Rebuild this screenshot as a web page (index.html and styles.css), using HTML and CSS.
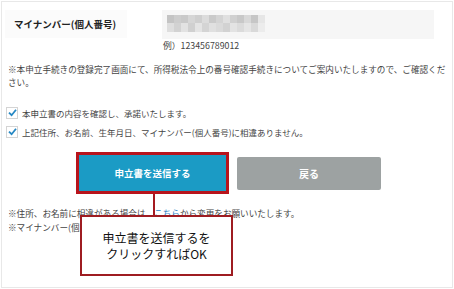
FILE: index.html
```html
<!DOCTYPE html>
<html lang="ja">
<head>
<meta charset="utf-8">
<link rel="stylesheet" href="styles.css">
</head>
<body>
<div class="frame">
  <div class="field-row">
    <div class="label">マイナンバー(個人番号)</div>
    <div class="input-col">
      <div class="input">
        <svg class="mosaic" width="98" height="17" viewBox="0 0 98 17">
          <rect x="0" y="0" width="7" height="8" fill="#c4c4c4"/>
          <rect x="7" y="0" width="7" height="8" fill="#cdcdcd"/>
          <rect x="14" y="0" width="7" height="8" fill="#c9c9c9"/>
          <rect x="21" y="0" width="7" height="8" fill="#d6d6d6"/>
          <rect x="28" y="0" width="7" height="8" fill="#cfcfcf"/>
          <rect x="35" y="0" width="7" height="8" fill="#dcdcdc"/>
          <rect x="42" y="0" width="7" height="8" fill="#cacaca"/>
          <rect x="49" y="0" width="7" height="8" fill="#d4d4d4"/>
          <rect x="56" y="0" width="7" height="8" fill="#e0e0e0"/>
          <rect x="63" y="0" width="7" height="8" fill="#d0d0d0"/>
          <rect x="70" y="0" width="7" height="8" fill="#c8c8c8"/>
          <rect x="77" y="0" width="7" height="8" fill="#d8d8d8"/>
          <rect x="84" y="0" width="7" height="8" fill="#c6c6c6"/>
          <rect x="91" y="0" width="7" height="8" fill="#e6e6e6"/>
          <rect x="0" y="8" width="7" height="9" fill="#dedede"/>
          <rect x="7" y="8" width="7" height="9" fill="#d2d2d2"/>
          <rect x="14" y="8" width="7" height="9" fill="#e2e2e2"/>
          <rect x="21" y="8" width="7" height="9" fill="#d0d0d0"/>
          <rect x="28" y="8" width="7" height="9" fill="#e4e4e4"/>
          <rect x="35" y="8" width="7" height="9" fill="#d4d4d4"/>
          <rect x="42" y="8" width="7" height="9" fill="#e0e0e0"/>
          <rect x="49" y="8" width="7" height="9" fill="#dadada"/>
          <rect x="56" y="8" width="7" height="9" fill="#d2d2d2"/>
          <rect x="63" y="8" width="7" height="9" fill="#e3e3e3"/>
          <rect x="70" y="8" width="7" height="9" fill="#dbdbdb"/>
          <rect x="77" y="8" width="7" height="9" fill="#e5e5e5"/>
          <rect x="84" y="8" width="7" height="9" fill="#d9d9d9"/>
          <rect x="91" y="8" width="7" height="9" fill="#ececec"/>
        </svg>
      </div>
      <div class="example">例）123456789012</div>
    </div>
  </div>

  <p class="note">※本申立手続きの登録完了画面にて、所得税法令上の番号確認手続きについてご案内いたしますので、ご確認ください。</p>

  <div class="checks">
    <div class="check-row">
      <span class="box"><svg width="9" height="9" viewBox="0 0 9 9"><path d="M1 4.6 L3.6 7.2 L8 1.8" fill="none" stroke="#2688c4" stroke-width="1.8"/></svg></span>
      <span>本申立書の内容を確認し、承諾いたします。</span>
    </div>
    <div class="check-row">
      <span class="box"><svg width="9" height="9" viewBox="0 0 9 9"><path d="M1 4.6 L3.6 7.2 L8 1.8" fill="none" stroke="#2688c4" stroke-width="1.8"/></svg></span>
      <span>上記住所、お名前、生年月日、マイナンバー(個人番号)に相違ありません。</span>
    </div>
  </div>

  <div class="buttons">
    <div class="highlight">
      <div class="btn btn-submit">申立書を送信する</div>
    </div>
    <div class="btn btn-back">戻る</div>
  </div>

  <div class="foot-notes">
    <p>※住所、お名前に相違がある場合は、<span class="link">こちら</span>から変更をお願いいたします。</p>
    <p>※マイナンバー(個人番号)の変更</p>
  </div>

  <div class="connector"></div>
  <div class="callout">申立書を送信するを<br>クリックすればOK</div>
</div>
</body>
</html>
```
FILE: styles.css
```css
html, body {
  margin: 0;
  padding: 0;
  background: #ffffff;
}
body {
  font-family: "Noto Sans CJK JP", "Noto Sans", sans-serif;
  color: #3a3a3a;
}
.frame {
  position: relative;
  margin: 1px 0 0 1px;
  width: 450px;
  height: 285px;
  border: 1px solid #e8e8e8;
  overflow: hidden;
}
.field-row {
  display: flex;
  align-items: flex-start;
  margin-top: 8px;
}
.label {
  margin-left: 3px;
  width: 113px;
  height: 28px;
  padding-left: 9px;
  background: #fbfbfb;
  font-size: 9.5px;
  font-weight: bold;
  line-height: 28px;
  color: #222;
  white-space: nowrap;
}
.input-col {
  margin-left: 35px;
}
.input {
  width: 272px;
  height: 29px;
  background: #f6f6f6;
  display: flex;
  align-items: flex-start;
}
.mosaic {
  display: block;
  margin: 5px 0 0 5px;
}
.example {
  margin-left: 1px;
  font-size: 8.8px;
  line-height: 13px;
  color: #444;
}
.note {
  margin: 11px 0 0 6px;
  width: 442px;
  font-size: 8.6px;
  line-height: 13px;
  color: #444;
}
.checks {
  margin-top: 14px;
}
.check-row {
  display: flex;
  align-items: center;
  height: 19px;
  margin-left: 4px;
  font-size: 8.5px;
  color: #444;
}
.box {
  width: 10px;
  height: 10px;
  border: 1px solid #d4d4d4;
  background: #fff;
  margin-right: 4px;
  display: flex;
  align-items: center;
  justify-content: center;
}
.box svg {
  display: block;
}
.buttons {
  display: flex;
  align-items: center;
  margin: 11px 0 0 74px;
  gap: 8px;
}
.highlight {
  border: 3px solid #b8141c;
  width: 147px;
  height: 36px;
}
.btn {
  display: flex;
  align-items: center;
  justify-content: center;
  color: #fff;
  font-weight: bold;
  font-size: 9.5px;
}
.btn-submit {
  width: 147px;
  height: 36px;
  background: #1b9bc5;
}
.btn-back {
  width: 144px;
  height: 33px;
  background: #9da2a2;
  border-radius: 2px;
  font-size: 10px;
}
.foot-notes {
  margin: 12px 0 0 6px;
  font-size: 8.6px;
  line-height: 14px;
  color: #444;
}
.foot-notes p {
  margin: 0;
  white-space: nowrap;
}
.link {
  color: #2a7fc4;
}
.connector {
  position: absolute;
  left: 151px;
  top: 192px;
  width: 2px;
  height: 22px;
  background: #a51a20;
}
.callout {
  position: absolute;
  left: 78px;
  top: 213px;
  width: 149px;
  height: 57px;
  border: 2px solid #9e1c21;
  background: #fff;
  display: flex;
  align-items: center;
  justify-content: center;
  text-align: center;
  font-size: 12px;
  line-height: 16px;
  color: #111;
}
```
